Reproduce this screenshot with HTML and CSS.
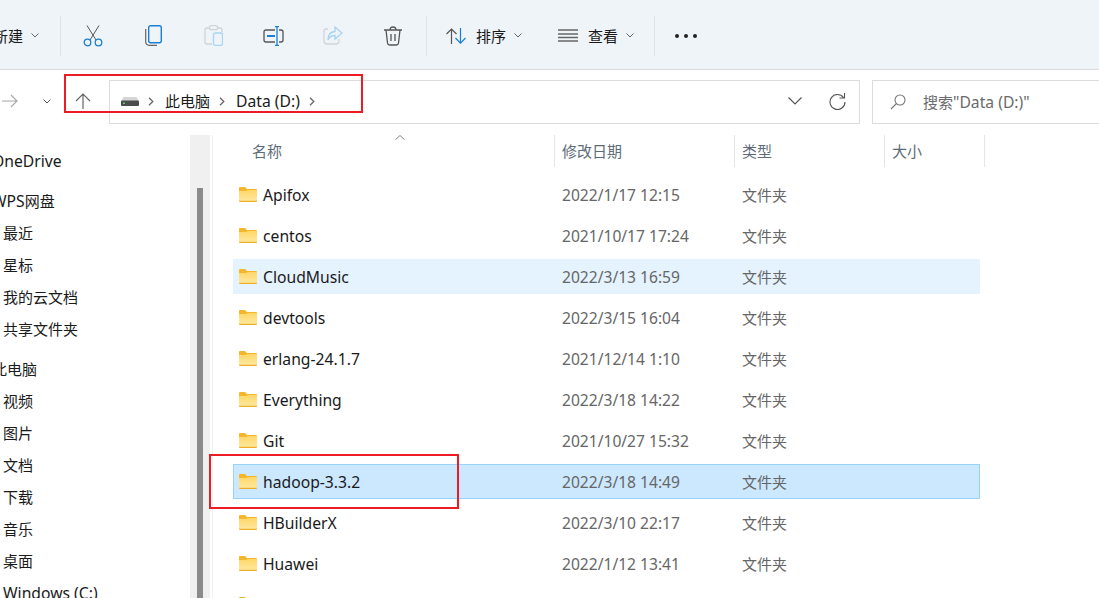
FILE: index.html
```html
<!DOCTYPE html>
<html>
<head>
  <meta charset="utf-8">
  <title>Data (D:)</title>
  <link rel="stylesheet" href="styles.css">
</head>
<body>
<svg class="defs" width="0" height="0">
  <defs>
    <linearGradient id="fold" x1="0" y1="0" x2="0" y2="1">
      <stop offset="0" stop-color="#ffd768"/>
      <stop offset="1" stop-color="#ffe9a3"/>
    </linearGradient>
    <symbol id="folder" viewBox="0 0 18 15">
      <path d="M0 1q0-1 1-1h5l2 2h9q1 0 1 1v2H0z" fill="#f6b62c"/>
      <path d="M0 4h7l2-1h9v11q0 1-1 1H1q-1 0-1-1z" fill="url(#fold)"/>
      <path d="M0 13.800h18v.2q0 1-1 1H1q-1 0-1-1z" fill="#eeae2a"/>
    </symbol>
    <symbol id="chev" viewBox="0 0 8 5">
      <path d="M.5.500 4 4 7.500.5" fill="none" stroke="currentColor"/>
    </symbol>
    <symbol id="crumb" viewBox="0 0 6 9">
      <path d="M1 .7 4.800 4.500 1 8.300" fill="none" stroke="currentColor" stroke-width="1.300"/>
    </symbol>
  </defs>
</svg>

<div class="toolbar">
  <div class="tb-new">
    <span class="tb-text">新建</span>
    <svg class="tb-chev"><use href="#chev"/></svg>
  </div>
  <div class="tb-sep"></div>
  <div class="tb-icons">
    <div class="tb-btn">
      <svg width="20" height="22" viewBox="0 0 20 22" fill="none">
        <path d="M4 .5 13 15M16 .5 7 15" stroke="#555"/>
        <circle cx="4.500" cy="17.500" r="3.300" stroke="#1a7fd4" stroke-width="1.300"/>
        <circle cx="15.500" cy="17.500" r="3.300" stroke="#1a7fd4" stroke-width="1.300"/>
      </svg>
    </div>
    <div class="tb-btn">
      <svg width="17" height="21" viewBox="0 0 17 21" fill="none">
        <path d="M.7 4v12.500q0 3.800 3.800 3.800H12" stroke="#666" stroke-width="1.200"/>
        <rect x="3.700" y=".7" width="12.600" height="17" rx="2" stroke="#1a7fd4" stroke-width="1.400"/>
      </svg>
    </div>
    <div class="tb-btn">
      <svg width="19" height="21" viewBox="0 0 19 21" fill="none">
        <path d="M5 3H3Q1 3 1 5v12q0 2 2 2h5M14 3h2q2 0 2 2v2" stroke="#cfd3d6" stroke-width="1.300"/>
        <rect x="5.500" y=".7" width="8" height="4" rx="1.500" stroke="#cfd3d6" stroke-width="1.300"/>
        <rect x="9.500" y="8" width="9" height="12.300" rx="1.500" stroke="#a9d3f3" stroke-width="1.300"/>
      </svg>
    </div>
    <div class="tb-btn">
      <svg width="21" height="20" viewBox="0 0 21 20" fill="none">
        <path d="M12 4H3Q1 4 1 6v8q0 2 2 2h9M16 4h2q2 0 2 2v8q0 2-2 2h-2" stroke="#555" stroke-width="1.300"/>
        <path d="M4 10h8" stroke="#1a7fd4" stroke-width="2"/>
        <path d="M12 .7h4M14 1v18M12 19.300h4" stroke="#1a7fd4" stroke-width="1.300"/>
      </svg>
    </div>
    <div class="tb-btn">
      <svg width="20" height="19" viewBox="0 0 20 19" fill="none">
        <path d="M5 3H3Q1 3 1 5v10q0 3 3 3h9q3 0 3-3v-2" stroke="#d2d5d8" stroke-width="1.300"/>
        <path d="M12 1l7 6-7 6V9.500Q7 9.500 5 14q0-8 7-8.500z" stroke="#a9d3f3" stroke-width="1.300"/>
      </svg>
    </div>
    <div class="tb-btn">
      <svg width="20" height="20" viewBox="0 0 20 20" fill="none" stroke="#555" stroke-width="1.300">
        <path d="M1 4h18M7 4q0-3 3-3t3 3M3 4l1.500 13q.2 2 2.200 2h6.600q2 0 2.200-2L17 4"/>
        <path d="M8 8v7M12 8v7"/>
      </svg>
    </div>
  </div>
  <div class="tb-sep"></div>
  <div class="tb-menu sort">
    <svg width="20" height="16" viewBox="0 0 20 16" fill="none">
      <path d="M.5 6 5.500 1l5 5M5.500 1v15" stroke="#555" stroke-width="1.200"/>
      <path d="M9.500 10l5 5.200 5-5.200M14.500 15V0" stroke="#1a7fd4" stroke-width="1.200"/>
    </svg>
    <span class="tb-text">排序</span>
    <svg class="tb-chev"><use href="#chev"/></svg>
  </div>
  <div class="tb-menu view">
    <svg width="20" height="13" viewBox="0 0 20 13" fill="none" stroke="#666" stroke-width="1.300">
      <path d="M0 1h20M0 5h20M0 8.500h20M0 12h20"/>
    </svg>
    <span class="tb-text">查看</span>
    <svg class="tb-chev"><use href="#chev"/></svg>
  </div>
  <div class="tb-sep sep-last"></div>
  <div class="tb-more"><i></i><i></i><i></i></div>
</div>

<div class="addr-row">
  <div class="nav">
    <svg width="16" height="14" viewBox="0 0 16 14" fill="none" stroke="#a6a6a6" stroke-width="1.100"><path d="M0 7h15M9 1l6 6-6 6"/></svg>
    <svg class="nav-chev" width="8" height="5"><use href="#chev"/></svg>
    <svg class="nav-up" width="16" height="16" viewBox="0 0 16 16" fill="none" stroke="#666" stroke-width="1.200"><path d="M1 8l7-7 7 7M8 1v15"/></svg>
  </div>
  <div class="addr-box">
    <svg class="drive" width="18" height="9" viewBox="0 0 18 9">
      <path d="M2.500 0h13L18 4H0z" fill="#d5d5d5"/>
      <rect y="3.500" width="18" height="5.500" rx="1" fill="#4b4b4b"/>
      <rect x="2" y="5.500" width="2" height="1.500" fill="#5ed35e"/>
    </svg>
    <svg class="crumb-sep"><use href="#crumb"/></svg>
    <span class="cjk">此电脑</span>
    <svg class="crumb-sep"><use href="#crumb"/></svg>
    <span>Data (D:)</span>
    <svg class="crumb-sep"><use href="#crumb"/></svg>
    <span class="addr-tools">
      <svg width="14" height="8" viewBox="0 0 14 8" fill="none" stroke="#555" stroke-width="1.200"><path d="M.5.500 7 7 13.500.5"/></svg>
      <svg width="17" height="17" viewBox="0 0 17 17" fill="none" stroke="#555" stroke-width="1.100"><path d="M14.500 4.500A7.500 7.500 0 1 0 16 9M15.500 0v5h-5"/></svg>
    </span>
  </div>
  <div class="search-box">
    <svg width="16" height="16" viewBox="0 0 16 16" fill="none" stroke="#777" stroke-width="1.100"><circle cx="10" cy="6" r="5"/><path d="M6.500 9.500 1 15"/></svg>
    <span><span class="cjk">搜索</span>"Data (D:)"</span>
  </div>
</div>

<div class="main">
  <div class="side">
    <div class="side-group">
      <div class="side-item top">OneDrive</div>
    </div>
    <div class="side-group">
      <div class="side-item top"><span>WPS<span class="cjk">网盘</span></span></div>
      <div class="side-item cjk">最近</div>
      <div class="side-item cjk">星标</div>
      <div class="side-item cjk">我的云文档</div>
      <div class="side-item cjk">共享文件夹</div>
    </div>
    <div class="side-group">
      <div class="side-item top cjk">此电脑</div>
      <div class="side-item cjk">视频</div>
      <div class="side-item cjk">图片</div>
      <div class="side-item cjk">文档</div>
      <div class="side-item cjk">下载</div>
      <div class="side-item cjk">音乐</div>
      <div class="side-item cjk">桌面</div>
      <div class="side-item">Windows (C:)</div>
    </div>
  </div>
  <div class="side-scroll"><div class="thumb"></div></div>

  <div class="list">
    <div class="head">
      <div class="col-name">名称<svg class="sort-mark" width="10" height="5" viewBox="0 0 10 5"><path d="M.5 4.500 5 .5l4.500 4" fill="none" stroke="#888"/></svg></div>
      <div class="col-date">修改日期</div>
      <div class="col-type">类型</div>
      <div class="col-size">大小</div>
    </div>
    <div class="row"><div class="col-name"><svg class="fld"><use href="#folder"/></svg>Apifox</div><div class="col-date">2022/1/17 12:15</div><div class="col-type">文件夹</div></div>
    <div class="row"><div class="col-name"><svg class="fld"><use href="#folder"/></svg>centos</div><div class="col-date">2021/10/17 17:24</div><div class="col-type">文件夹</div></div>
    <div class="row hover"><div class="col-name"><svg class="fld"><use href="#folder"/></svg>CloudMusic</div><div class="col-date">2022/3/13 16:59</div><div class="col-type">文件夹</div></div>
    <div class="row"><div class="col-name"><svg class="fld"><use href="#folder"/></svg>devtools</div><div class="col-date">2022/3/15 16:04</div><div class="col-type">文件夹</div></div>
    <div class="row"><div class="col-name"><svg class="fld"><use href="#folder"/></svg>erlang-24.1.7</div><div class="col-date">2021/12/14 1:10</div><div class="col-type">文件夹</div></div>
    <div class="row"><div class="col-name"><svg class="fld"><use href="#folder"/></svg>Everything</div><div class="col-date">2022/3/18 14:22</div><div class="col-type">文件夹</div></div>
    <div class="row"><div class="col-name"><svg class="fld"><use href="#folder"/></svg>Git</div><div class="col-date">2021/10/27 15:32</div><div class="col-type">文件夹</div></div>
    <div class="row selected"><div class="col-name"><svg class="fld"><use href="#folder"/></svg>hadoop-3.3.2</div><div class="col-date">2022/3/18 14:49</div><div class="col-type">文件夹</div></div>
    <div class="row"><div class="col-name"><svg class="fld"><use href="#folder"/></svg>HBuilderX</div><div class="col-date">2022/3/10 22:17</div><div class="col-type">文件夹</div></div>
    <div class="row"><div class="col-name"><svg class="fld"><use href="#folder"/></svg>Huawei</div><div class="col-date">2022/1/12 13:41</div><div class="col-type">文件夹</div></div>
    <div class="row"><div class="col-name"><svg class="fld"><use href="#folder"/></svg></div></div>
  </div>
</div>

<div class="mark mark-addr"></div>
<div class="mark mark-row"></div>
</body>
</html>
```
FILE: styles.css
```css
* {
  box-sizing: border-box;
}

html, body {
  height: 100%;
}

body {
  margin: 0;
  overflow: hidden;
  position: relative;
  background: #fff;
  color: #1a1a1a;
  font-family: "Noto Sans", "Noto Sans CJK SC", sans-serif;
  font-size: 15.700px;
  line-height: 20px;
}

.cjk {
  font-size: 15px;
}

.defs {
  position: absolute;
}

/* toolbar */
.toolbar {
  display: flex;
  align-items: center;
  height: 70px;
  background: #eff4f9;
  border-bottom: 1px solid #dcdcdc;
  padding-top: 2px;
}

.tb-new {
  display: flex;
  align-items: center;
  justify-content: flex-end;
  width: 60px;
  padding-right: 21px;
  white-space: nowrap;
}

.tb-text {
  font-size: 15px;
  white-space: nowrap;
}

.tb-chev {
  flex: none;
  width: 8px;
  height: 5px;
  margin-left: 8px;
  color: #666;
}

.tb-sep {
  width: 1px;
  height: 40px;
  background: #dfe3e6;
}

.tb-icons {
  display: flex;
  margin: 0 3px 0 2px;
}

.tb-btn {
  display: flex;
  align-items: center;
  justify-content: center;
  width: 60px;
  height: 40px;
}

.tb-menu {
  display: flex;
  align-items: center;
}

.tb-menu .tb-text {
  margin-left: 10px;
}

.sort {
  margin-left: 19px;
}

.view {
  margin-left: 36px;
}

.sep-last {
  margin-left: 20px;
}

.tb-more {
  display: flex;
  gap: 5px;
  margin-left: 20px;
}

.tb-more i {
  width: 4px;
  height: 4px;
  border-radius: 50%;
  background: #222;
}

/* address row */
.addr-row {
  display: flex;
  align-items: flex-start;
  height: 65px;
  padding-top: 10px;
}

.nav {
  display: flex;
  align-items: center;
  width: 109px;
  height: 44px;
  padding-left: 2px;
  padding-bottom: 2px;
}

.nav-chev {
  margin-left: 25px;
  color: #555;
}

.nav-up {
  margin-left: 24px;
}

.addr-box {
  display: flex;
  align-items: center;
  width: 751px;
  height: 44px;
  padding: 0 13px 2px 11px;
  border: 1px solid #dcdcdc;
}

.crumb-sep {
  flex: none;
  width: 6px;
  height: 9px;
  margin: 0 11px 0 9px;
  color: #666;
}

.addr-tools {
  display: flex;
  align-items: center;
  gap: 27px;
  margin-left: auto;
}

.search-box {
  display: flex;
  align-items: center;
  gap: 17px;
  flex: 1;
  height: 44px;
  margin-left: 12px;
  margin-right: -4px;
  padding-left: 17px;
  border: 1px solid #dcdcdc;
  color: #6b6b6b;
}

/* sidebar and list */
.main {
  display: flex;
  height: 463px;
  overflow: hidden;
}

.side {
  width: 190px;
  padding-top: 10px;
  overflow: hidden;
}

.side-group {
  margin-bottom: 8px;
}

.side-item {
  display: flex;
  align-items: center;
  height: 32px;
  padding-left: 3px;
  white-space: nowrap;
}

.side-item.top {
  margin-left: -11px;
}

.side-scroll {
  width: 20px;
  padding: 53px 7px 0;
  background: #f0f0f0;
}

.thumb {
  width: 6px;
  height: 100%;
  background: #8a8a8a;
}

.list {
  flex: 1;
  margin-left: 2px;
  padding-left: 21px;
  border-left: 1px solid #f2f2f2;
}

.head, .row {
  display: grid;
  grid-template-columns: 321px 180px 150px 100px;
  align-items: center;
}

.head {
  height: 32px;
  color: #5d6b78;
  font-size: 15px;
  margin-bottom: 10px;
}

.head > div {
  position: relative;
  height: 32px;
  line-height: 32px;
  padding-left: 7px;
  border-right: 1px solid #e5e5e5;
}

.head .col-name {
  padding-left: 18px;
}

.sort-mark {
  position: absolute;
  left: 161px;
  top: 0;
}

.row {
  width: 747px;
  height: 35px;
  margin: 0 0 6px -1px;
  border: 1px solid transparent;
  color: #666;
}

.row .col-name {
  display: flex;
  align-items: center;
  color: #1a1a1a;
  padding-left: 5px;
}

.row .col-date {
  padding-left: 7px;
  font-size: 15.600px;
}

.row .col-type {
  padding-left: 7px;
  font-size: 15px;
}

.fld {
  width: 18px;
  height: 15px;
  margin-right: 6px;
  flex: none;
}

.row.hover {
  background: #e5f3ff;
  border-color: #e5f3ff;
}

.row.selected {
  background: #cce8ff;
  border-color: #99d1ff;
}

/* red annotation boxes */
.mark {
  position: absolute;
  border: 2px solid #ed1c24;
}

.mark-addr {
  left: 64px;
  top: 74px;
  width: 299px;
  height: 39px;
}

.mark-row {
  left: 209px;
  top: 454px;
  width: 250px;
  height: 55px;
}
```
